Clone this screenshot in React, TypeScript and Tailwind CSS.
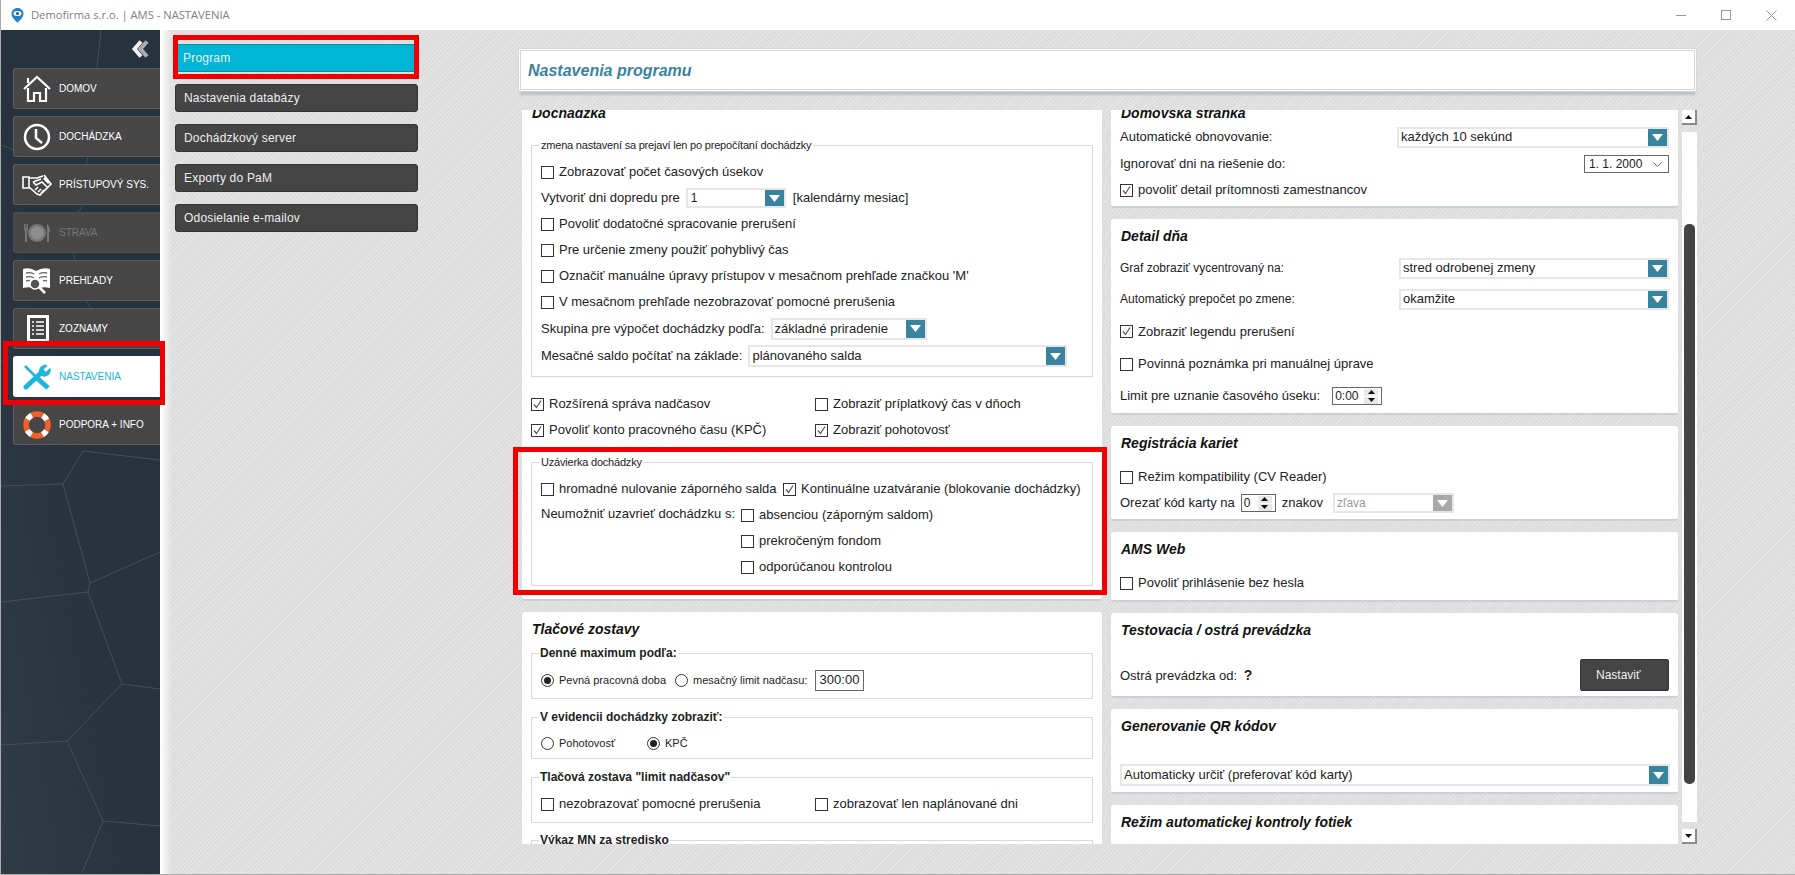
import React from "react";

const Arrow = ({ up }: { up?: boolean }) => (
  <svg width="7" height="4" viewBox="0 0 7 4">
    <path d={up ? "M3.500 0L7 4H0z" : "M0 0h7L3.500 4z"} fill="#111" />
  </svg>
);

const Box = ({ checked, label, className }: { checked?: boolean; label: string; className?: string }) => (
  <div className={`flex items-center gap-[5px] ${className || ""}`}>
    <div className="w-[13px] h-[13px] border border-[#333] bg-white flex items-center justify-center shrink-0">
      {checked && (
        <svg width="11" height="11" viewBox="0 0 11 11">
          <path d="M2 5.500L4.500 8.500L9 1.500" fill="none" stroke="#555" strokeWidth="1.200" />
        </svg>
      )}
    </div>
    <span className="whitespace-nowrap">{label}</span>
  </div>
);

const Radio = ({ checked, label, className }: { checked?: boolean; label: string; className?: string }) => (
  <div className={`flex items-center gap-[5px] text-[11px] ${className || ""}`}>
    <div className="w-[13px] h-[13px] rounded-full border border-[#333] bg-white flex items-center justify-center shrink-0">
      {checked && <div className="w-[7px] h-[7px] rounded-full bg-[#222]" />}
    </div>
    <span className="whitespace-nowrap">{label}</span>
  </div>
);

const Select = ({ value, className, disabled }: { value: string; className: string; disabled?: boolean }) => (
  <div className={`flex items-stretch border-2 border-[#e6e6e6] bg-white shrink-0 ${className}`}>
    <span className={`flex-1 pl-[2px] flex items-center whitespace-nowrap ${disabled ? "text-[#999]" : ""}`}>{value}</span>
    <div className={`w-[19px] flex items-center justify-center ${disabled ? "bg-[#a9a9a9]" : "bg-[#38849e]"}`}>
      <svg width="11" height="7" viewBox="0 0 11 7">
        <path d="M0 0h11L5.500 7z" fill="#fff" />
      </svg>
    </div>
  </div>
);

const Spin = ({ value, className }: { value: string; className: string }) => (
  <div className={`flex items-center border border-[#666] bg-white pl-[2px] pr-[3px] shrink-0 ${className}`}>
    <span className="flex-1 text-[12px]">{value}</span>
    <div className="flex flex-col gap-[1px]">
      <div className="w-[14px] h-[7px] bg-[#e8e8e8] flex items-center justify-center"><Arrow up /></div>
      <div className="w-[14px] h-[7px] bg-[#e8e8e8] flex items-center justify-center"><Arrow /></div>
    </div>
  </div>
);

const Panel = ({ title, className, children }: { title: string; className?: string; children?: React.ReactNode }) => (
  <div className={`bg-white rounded-[3px] border-b-2 border-[#c9d0d6] px-[9px] shrink-0 ${className || ""}`}>
    <div className="h-[34px] flex items-center text-[14px] font-bold italic text-[#111] whitespace-nowrap pl-[1px]">{title}</div>
    {children}
  </div>
);

const Group = ({ title, bold, className, children }: { title: string; bold?: boolean; className?: string; children: React.ReactNode }) => (
  <fieldset className={`border border-[#d8d8d8] px-[9px] ${className || ""}`}>
    <legend className={`leading-[14px] whitespace-nowrap -ml-[2px] ${bold ? "px-[1px] text-[12px] font-bold" : "px-[2px] text-[11px] tracking-[-0.2px]"}`}>
      {title}
    </legend>
    {children}
  </fieldset>
);

const NavButton = ({ label, icon, active, dim }: { label: string; icon: React.ReactNode; active?: boolean; dim?: boolean }) => (
  <div
    className={`h-[41px] ml-[12px] flex items-center rounded-l-[3px] border border-r-0 ${
      active ? "bg-white border-white text-[#1eb4dc]" : dim ? "bg-[#474747] border-[#4e4e4e] text-[#777]" : "bg-[#464646] border-[#5c5c5c] text-white"
    }`}
  >
    <div className="w-[45px] h-full flex items-center justify-center shrink-0">{icon}</div>
    <span className="text-[10px] whitespace-nowrap">{label}</span>
  </div>
);

const SubButton = ({ label }: { label: string }) => (
  <div className="h-[28px] w-[243px] bg-[#444] rounded-[3px] border border-[#333] flex items-center pl-[8px] text-[12px] tracking-[0.2px] text-[#eee]">{label}</div>
);

export default function App() {
  return (
    <div className="w-[1795px] h-[875px] relative overflow-hidden flex flex-col bg-white font-['Liberation_Sans',sans-serif] text-[13px] text-[#222] border-l border-b border-[#aaa]">
      {/* title bar */}
      <div className="h-[30px] flex items-center shrink-0">
        <svg width="13" height="15" viewBox="0 0 13 15" className="ml-[10px]">
          <path d="M6.500 0C3 0 .5 2.500 .5 5.700c0 3.500 3.500 6.500 6 9 2.500-2.500 6-5.500 6-9C12.500 2.500 10 0 6.500 0z" fill="#2484c6" />
          <ellipse cx="6.500" cy="5.500" rx="4" ry="2.500" fill="#fff" />
          <circle cx="6.500" cy="5.500" r="1.500" fill="#2b4f66" />
        </svg>
        <span className="ml-[7px] text-[11.2px] text-[#808080] font-['Open_Sans',sans-serif]">Demofirma s.r.o. | AMS - NASTAVENIA</span>
        <div className="ml-auto flex items-center mr-[18px] gap-[35px]">
          <div className="w-[10px] h-[1px] bg-[#999]" />
          <div className="w-[10px] h-[10px] border border-[#999]" />
          <svg width="11" height="11" viewBox="0 0 11 11">
            <path d="M.5.5l10 10M10.500.5l-10 10" stroke="#999" fill="none" />
          </svg>
        </div>
      </div>

      <div className="flex flex-1 min-h-0">
        {/* sidebar */}
        <div className="w-[159px] shrink-0 relative bg-linear-to-tr from-[#2f3c47] via-[#26323e] to-[#26323e] overflow-hidden">
          <svg className="absolute left-0 top-[-30px]" width="159" height="875" viewBox="0 0 159 875">
            <path
              d="M100 30L96 68M92 116L88 152L85 164M82 204L78 212M72 252L74 260M85 300L90 308M0 145L13 150M72 357L67 365M0 362L3 362M0 486L62 484L89 583L87 592L0 602M89 583L159 552M87 592L121 684L159 689M121 684L66 741L0 745M66 741L102 821L159 826M102 821L81 873M82 451L159 460M82 451L62 484"
              fill="none"
              stroke="#3b5555"
              strokeWidth="1"
            />
          </svg>
          <div className="relative flex flex-col gap-[7px] pt-[38px]">
            <div className="absolute left-[130px] top-[10px]">
              <svg width="18" height="18" viewBox="0 0 18 18" fill="none">
                <path d="M16 1.500L9.500 9L16 16.500" stroke="#a9adb1" strokeWidth="4" />
                <path d="M10 1.500L3.500 9L10 16.500" stroke="#f2f2f2" strokeWidth="4" />
              </svg>
            </div>
            <NavButton
              label="DOMOV"
              icon={
                <svg width="28" height="28" viewBox="0 0 28 28" fill="none" stroke="#fff" strokeWidth="2.200">
                  <path d="M1 14L14 2L27 14" />
                  <path d="M5 3V8M5 13V26H11V18H17V26H23V13" />
                </svg>
              }
            />
            <NavButton
              label="DOCHÁDZKA"
              icon={
                <svg width="28" height="28" viewBox="0 0 28 28" fill="none" stroke="#fff" strokeWidth="2.500">
                  <circle cx="14" cy="14" r="12" />
                  <path d="M13 6V15L19 20" />
                </svg>
              }
            />
            <NavButton
              label="PRÍSTUPOVÝ SYS."
              icon={
                <svg width="30" height="22" viewBox="0 0 30 22" fill="none" stroke="#fff" strokeWidth="1.600">
                  <path d="M1 3H7V14H1z" />
                  <path d="M7 4H15L21 2M7 13L15 20L18 21L29 10L22 1" />
                  <path d="M11 8L19 5M11 8L14 11L20 8L25 13" />
                  <path d="M13 16L16 13M16 18L19 15M19 19L22 16" />
                  <path d="M22 4L27 9" strokeWidth="2.500" />
                </svg>
              }
            />
            <NavButton
              dim
              label="STRAVA"
              icon={
                <svg width="26" height="20" viewBox="0 0 26 20" fill="#777">
                  <circle cx="13" cy="10" r="9" />
                  <circle cx="13" cy="10" r="6.500" fill="#8d8d8d" />
                  <path d="M0 1h1v4h.5V1h1v4H3V1h1v6L3 8v11H1V8L0 7z" />
                  <path d="M23 1q3 2 3 8h-1v10h-2z" />
                </svg>
              }
            />
            <NavButton
              label="PREHĽADY"
              icon={
                <svg width="29" height="27" viewBox="0 0 29 27">
                  <path d="M1 2Q8 0 14 4Q21 0 28 2V21Q21 19 14 22Q8 19 1 21z" fill="#fff" />
                  <path d="M4 6Q8 5 12 7M4 10Q8 9 12 11M4 14Q6 13 8 14M17 7Q21 5 25 6M17 11Q21 9 25 10M21 14Q23 13 25 14" stroke="#666" strokeWidth="1.300" fill="none" />
                  <circle cx="13" cy="17" r="5" fill="#555" stroke="#fff" strokeWidth="1.500" />
                  <path d="M17 20L23 26" stroke="#fff" strokeWidth="2.500" />
                </svg>
              }
            />
            <NavButton
              label="ZOZNAMY"
              icon={
                <svg width="22" height="27" viewBox="0 0 22 27" className="ml-[2px]">
                  <rect width="22" height="27" fill="#fff" />
                  <rect x="3" y="3" width="16" height="21" fill="#444" />
                  <path d="M5 7h2M9 7h8M5 11h2M9 11h8M5 15h2M9 15h8M5 19h2M9 19h8" stroke="#fff" strokeWidth="1.500" />
                </svg>
              }
            />
            <NavButton
              active
              label="NASTAVENIA"
              icon={
                <svg width="28" height="26" viewBox="0 0 28 26" fill="none" stroke="#1eb4dc">
                  <path d="M3 23L18 9" strokeWidth="5" strokeLinecap="round" />
                  <path d="M16.500 8.500A6 6 0 0 1 24 1.500L20 5.500L23 8.500L27 4.500A6 6 0 0 1 20 12z" fill="#1eb4dc" strokeWidth="1" />
                  <path d="M2 2L12 12" strokeWidth="2.500" />
                  <path d="M14 14L25 24" strokeWidth="5" />
                </svg>
              }
            />
            <NavButton
              label="PODPORA + INFO"
              icon={
                <svg width="28" height="28" viewBox="0 0 28 28" fill="none" strokeWidth="5.500">
                  <circle cx="14" cy="14" r="11" stroke="#f0602a" />
                  <circle cx="14" cy="14" r="11" stroke="#fff" strokeDasharray="6 11.280" strokeDashoffset="3" transform="rotate(45 14 14)" />
                </svg>
              }
            />
          </div>
        </div>

        {/* hatched work area */}
        <div className="flex-1 min-w-0 relative flex bg-[repeating-linear-gradient(135deg,#e5e5e5_0,#e5e5e5_1px,#dddddd_1px,#dddddd_3px)]">
          <div className="absolute left-0 top-0 bottom-0 w-[12px] bg-linear-to-r from-white to-transparent" />

          {/* submenu */}
          <div className="relative w-[358px] shrink-0 pl-[15px] pt-[14px] flex flex-col gap-[12px]">
            <div className="h-[28px] w-[243px] bg-[#00b5d6] border-y border-[#19899f] flex items-center pl-[8px] text-[12px] tracking-[0.2px] text-[#eee]">Program</div>
            <SubButton label="Nastavenia databázy" />
            <SubButton label="Dochádzkový server" />
            <SubButton label="Exporty do PaM" />
            <SubButton label="Odosielanie e-mailov" />
          </div>

          {/* content */}
          <div className="w-[1179px] shrink-0 pt-[18px] flex flex-col">
            <div className="h-[44px] shrink-0 bg-white border-[3px] border-double border-[#d6d6d6] rounded-[2px] flex items-center pl-[7px] pt-[1px] shadow-[0_5px_2px_-2px_#b9c2c9] text-[16px] font-bold italic text-[#38849e]">
              Nastavenia programu
            </div>
            <div className="mt-[18px] h-[734px] flex overflow-hidden pl-[4px]">
              {/* left column */}
              <div className="w-[580px] shrink-0 -mt-[14px] flex flex-col gap-[11px]">
                <Panel title="Dochádzka" className="pl-[9px] pb-[13px]">
                  <Group title="zmena nastavení sa prejaví len po prepočítaní dochádzky" className="mt-[8px] pt-[7px] pb-[6px]">
                    <Box className="h-[26px]" label="Zobrazovať počet časových úsekov" />
                    <div className="h-[26px] flex items-center">
                      <span>Vytvoriť dni dopredu pre</span>
                      <Select value="1" className="ml-[6px] w-[100px] h-[20px] text-[12px] pl-[1px]" />
                      <span className="ml-[7px]">[kalendárny mesiac]</span>
                    </div>
                    <Box className="h-[26px]" label="Povoliť dodatočné spracovanie prerušení" />
                    <Box className="h-[26px]" label="Pre určenie zmeny použiť pohyblivý čas" />
                    <Box className="h-[26px]" label="Označiť manuálne úpravy prístupov v mesačnom prehľade značkou 'M'" />
                    <Box className="h-[26px]" label="V mesačnom prehľade nezobrazovať pomocné prerušenia" />
                    <div className="h-[27px] flex items-center">
                      <span>Skupina pre výpočet dochádzky podľa:</span>
                      <Select value="základné priradenie" className="ml-[6px] w-[156px] h-[22px]" />
                    </div>
                    <div className="h-[28px] flex items-center">
                      <span>Mesačné saldo počítať na základe:</span>
                      <Select value="plánovaného salda" className="ml-[6px] w-[319px] h-[22px]" />
                    </div>
                  </Group>
                  <div className="mt-[14px] grid grid-cols-[284px_1fr] auto-rows-[26px]">
                    <Box checked label="Rozšírená správa nadčasov" />
                    <Box label="Zobraziť príplatkový čas v dňoch" />
                    <Box checked label="Povoliť konto pracovného času (KPČ)" />
                    <Box checked label="Zobraziť pohotovosť" />
                  </div>
                  <Group title="Uzávierka dochádzky" className="mt-[12px] pt-[7px] pb-[5px]">
                    <div className="h-[26px] flex items-center">
                      <Box className="w-[242px]" label="hromadné nulovanie záporného salda" />
                      <Box checked label="Kontinuálne uzatváranie (blokovanie dochádzky)" />
                    </div>
                    <div className="flex">
                      <span className="w-[200px] pt-[2px]">Neumožniť uzavrieť dochádzku s:</span>
                      <div>
                        <Box className="h-[26px]" label="absenciou (záporným saldom)" />
                        <Box className="h-[26px]" label="prekročeným fondom" />
                        <Box className="h-[26px]" label="odporúčanou kontrolou" />
                      </div>
                    </div>
                  </Group>
                </Panel>
                <Panel title="Tlačové zostavy">
                  <Group bold title="Denné maximum podľa:" className="pt-[7px] pb-[5px]">
                    <div className="h-[26px] flex items-center">
                      <Radio checked className="w-[134px]" label="Pevná pracovná doba" />
                      <Radio className="w-[140px]" label="mesačný limit nadčasu:" />
                      <div className="w-[49px] h-[21px] border border-[#666] flex items-center justify-center">300:00</div>
                    </div>
                  </Group>
                  <Group bold title="V evidencii dochádzky zobraziť:" className="mt-[11px] pt-[6px] pb-[2px]">
                    <div className="h-[26px] flex items-center">
                      <Radio className="w-[106px]" label="Pohotovosť" />
                      <Radio checked label="KPČ" />
                    </div>
                  </Group>
                  <Group bold title='Tlačová zostava "limit nadčasov"' className="mt-[11px] pt-[7px] pb-[5px]">
                    <div className="h-[26px] flex items-center">
                      <Box className="w-[274px]" label="nezobrazovať pomocné prerušenia" />
                      <Box label="zobrazovať len naplánované dni" />
                    </div>
                  </Group>
                  <Group bold title="Výkaz MN za stredisko" className="mt-[10px] pt-[7px] pb-[4px]">
                    <div className="h-[26px]" />
                  </Group>
                </Panel>
              </div>

              {/* right column */}
              <div className="w-[567px] ml-[9px] shrink-0 -mt-[14px] flex flex-col gap-[11px]">
                <Panel title="Domovská stránka" className="pb-[4px]">
                  <div className="-mt-[6px] h-[26px] flex items-center justify-between">
                    <span>Automatické obnovovanie:</span>
                    <Select value="každých 10 sekúnd" className="w-[272px] h-[21px]" />
                  </div>
                  <div className="h-[28px] flex items-center justify-between">
                    <span>Ignorovať dni na riešenie do:</span>
                    <div className="w-[85px] h-[18px] border border-[#666] flex items-center justify-between pl-[4px] pr-[6px] text-[12px]">
                      1. 1. 2000
                      <svg width="9" height="5" viewBox="0 0 9 5">
                        <path d="M.5.5L4.500 4.500L8.500.5" fill="none" stroke="#666" />
                      </svg>
                    </div>
                  </div>
                  <Box checked className="h-[24px]" label="povoliť detail prítomnosti zamestnancov" />
                </Panel>
                <Panel title="Detail dňa" className="pb-[1px]">
                  <div className="h-[30px] flex items-center justify-between">
                    <span className="text-[12px]">Graf zobraziť vycentrovaný na:</span>
                    <Select value="stred odrobenej zmeny" className="w-[270px] h-[21px]" />
                  </div>
                  <div className="h-[32px] flex items-center justify-between">
                    <span className="text-[12px]">Automatický prepočet po zmene:</span>
                    <Select value="okamžite" className="w-[270px] h-[21px]" />
                  </div>
                  <Box checked className="h-[33px]" label="Zobraziť legendu prerušení" />
                  <Box className="h-[32px]" label="Povinná poznámka pri manuálnej úprave" />
                  <div className="h-[32px] flex items-center">
                    <span>Limit pre uznanie časového úseku:</span>
                    <Spin value="0:00" className="ml-[12px] w-[50px] h-[18px]" />
                  </div>
                </Panel>
                <Panel title="Registrácia kariet" className="pb-[3px]">
                  <Box className="mt-[4px] h-[26px]" label="Režim kompatibility (CV Reader)" />
                  <div className="h-[26px] flex items-center">
                    <span>Orezať kód karty na</span>
                    <Spin value="0" className="ml-[6px] w-[35px] h-[18px]" />
                    <span className="ml-[6px]">znakov</span>
                    <Select disabled value="zľava" className="ml-[10px] w-[121px] h-[20px] text-[12px]" />
                  </div>
                </Panel>
                <Panel title="AMS Web" className="pb-[4px]">
                  <Box className="mt-[4px] h-[26px]" label="Povoliť prihlásenie bez hesla" />
                </Panel>
                <Panel title="Testovacia / ostrá prevádzka" className="pb-[5px]">
                  <div className="mt-[12px] h-[32px] flex items-center justify-between">
                    <div>
                      Ostrá prevádzka od: <b className="ml-[3px] text-[14px] text-[#222]">?</b>
                    </div>
                    <div className="w-[89px] h-[32px] bg-[#444] rounded-[2px] border border-[#333] flex items-center pl-[15px] text-[12px] text-[#eee]">Nastaviť</div>
                  </div>
                </Panel>
                <Panel title="Generovanie QR kódov" className="pb-[6px]">
                  <Select value="Automaticky určiť (preferovať kód karty)" className="mt-[21px] w-[550px] h-[22px]" />
                </Panel>
                <Panel title="Režim automatickej kontroly fotiek" className="h-[80px]" />
              </div>

              {/* scrollbar */}
              <div className="w-[15px] ml-[4px] shrink-0 flex flex-col gap-[7px]">
                <div className="h-[15px] bg-white border-r-2 border-b-2 border-[#8a8a8a] flex items-center justify-center shrink-0"><Arrow up /></div>
                <div className="flex-1 bg-white pt-[92px] px-[2px]">
                  <div className="h-[560px] bg-[#444] rounded-[5px]" />
                </div>
                <div className="h-[15px] bg-white border-r-2 border-b-2 border-[#8a8a8a] flex items-center justify-center shrink-0"><Arrow /></div>
              </div>
            </div>
          </div>
        </div>
      </div>

      {/* red annotations */}
      <div className="absolute left-[172px] top-[35px] w-[246px] h-[44px] border-[5px] border-[#f00000]" />
      <div className="absolute left-[2px] top-[341px] w-[162px] h-[64px] border-[5px] border-[#f00000]" />
      <div className="absolute left-[512px] top-[447px] w-[594px] h-[148px] border-[5px] border-[#f00000]" />
    </div>
  );
}
